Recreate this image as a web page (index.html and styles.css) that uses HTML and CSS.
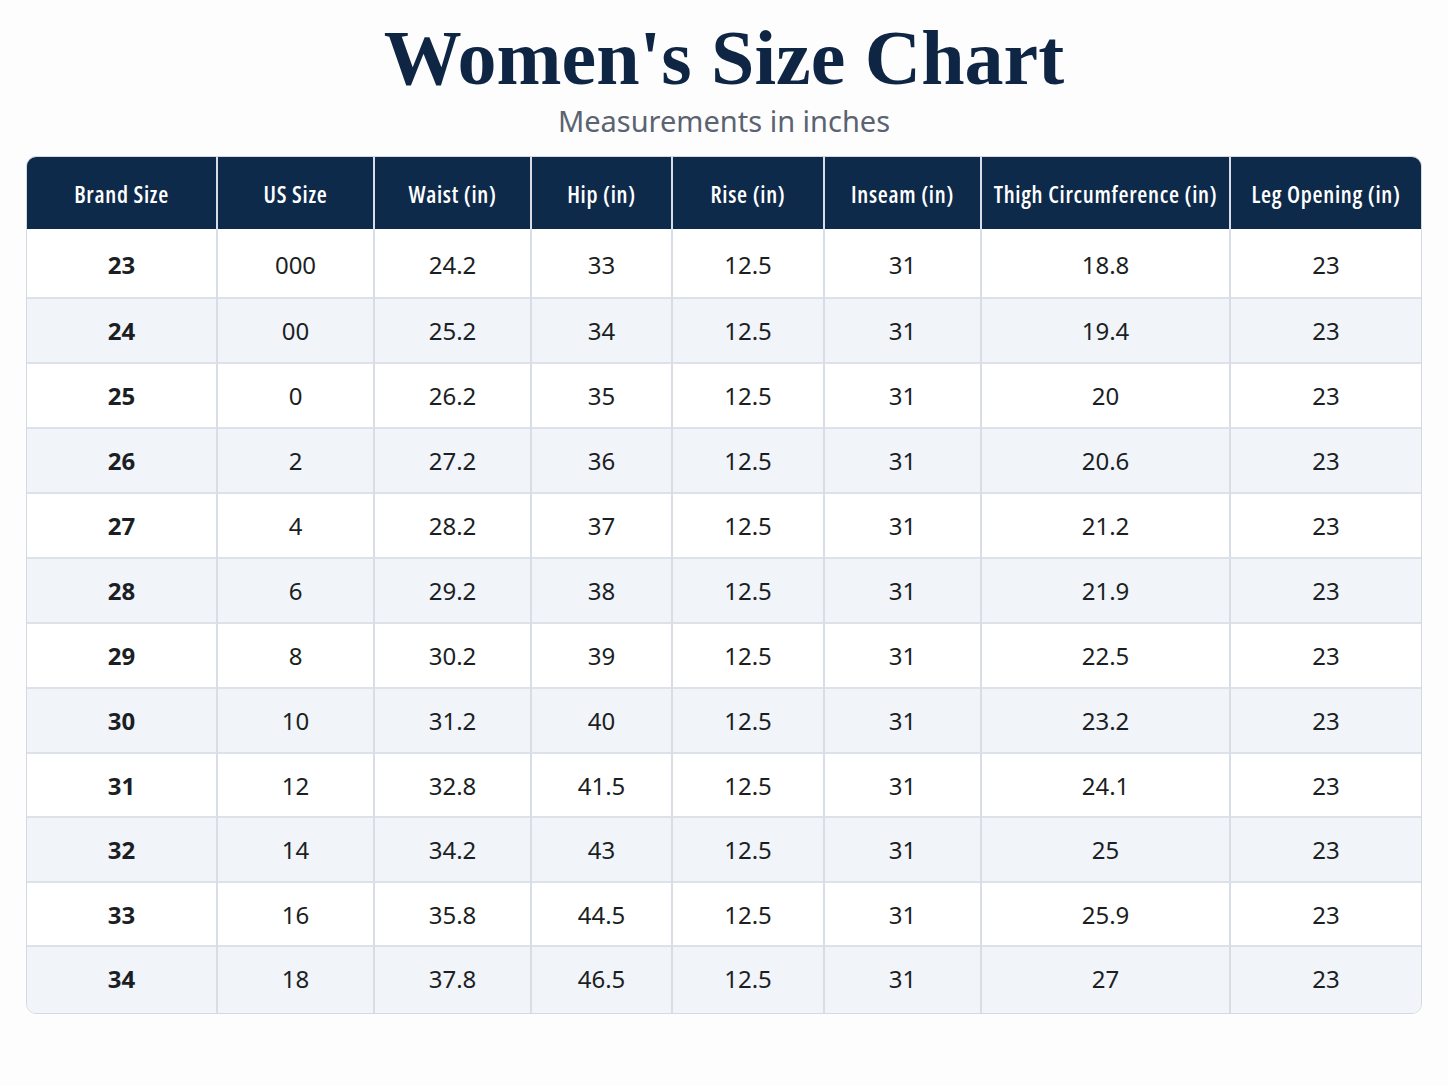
FILE: index.html
```html
<!DOCTYPE html>
<html lang="en">
<head>
<meta charset="utf-8">
<title>Women's Size Chart</title>
<link rel="stylesheet" href="styles.css">
</head>
<body>
<header class="page-head">
  <h1 class="title">Women's Size Chart</h1>
  <p class="subtitle">Measurements in inches</p>
</header>
<div class="chart">
<table class="size-table">
  <colgroup>
    <col class="c1"><col class="c2"><col class="c3"><col class="c4"><col class="c5"><col class="c6"><col class="c7"><col class="c8">
  </colgroup>
  <thead>
    <tr>
      <th>Brand Size</th><th>US Size</th><th>Waist (in)</th><th>Hip (in)</th><th>Rise (in)</th><th>Inseam (in)</th><th>Thigh Circumference (in)</th><th>Leg Opening (in)</th>
    </tr>
  </thead>
  <tbody>
    <tr class="first"><td>23</td><td>000</td><td>24.2</td><td>33</td><td>12.5</td><td>31</td><td>18.8</td><td>23</td></tr>
    <tr><td>24</td><td>00</td><td>25.2</td><td>34</td><td>12.5</td><td>31</td><td>19.4</td><td>23</td></tr>
    <tr><td>25</td><td>0</td><td>26.2</td><td>35</td><td>12.5</td><td>31</td><td>20</td><td>23</td></tr>
    <tr><td>26</td><td>2</td><td>27.2</td><td>36</td><td>12.5</td><td>31</td><td>20.6</td><td>23</td></tr>
    <tr><td>27</td><td>4</td><td>28.2</td><td>37</td><td>12.5</td><td>31</td><td>21.2</td><td>23</td></tr>
    <tr><td>28</td><td>6</td><td>29.2</td><td>38</td><td>12.5</td><td>31</td><td>21.9</td><td>23</td></tr>
    <tr><td>29</td><td>8</td><td>30.2</td><td>39</td><td>12.5</td><td>31</td><td>22.5</td><td>23</td></tr>
    <tr><td>30</td><td>10</td><td>31.2</td><td>40</td><td>12.5</td><td>31</td><td>23.2</td><td>23</td></tr>
    <tr class="tight"><td>31</td><td>12</td><td>32.8</td><td>41.5</td><td>12.5</td><td>31</td><td>24.1</td><td>23</td></tr>
    <tr><td>32</td><td>14</td><td>34.2</td><td>43</td><td>12.5</td><td>31</td><td>25</td><td>23</td></tr>
    <tr class="tight"><td>33</td><td>16</td><td>35.8</td><td>44.5</td><td>12.5</td><td>31</td><td>25.9</td><td>23</td></tr>
    <tr class="last"><td>34</td><td>18</td><td>37.8</td><td>46.5</td><td>12.5</td><td>31</td><td>27</td><td>23</td></tr>
  </tbody>
</table>
</div>
</body>
</html>
```
FILE: styles.css
```css
* { box-sizing: border-box; }
html, body {
  margin: 0;
  padding: 0;
  background: #fdfdfe;
}
body {
  font-family: "Noto Sans", "Open Sans", sans-serif;
  color: #1b1f24;
}
.page-head {
  text-align: center;
  padding-top: 18px;
}
.title {
  margin: 0;
  font-family: "Liberation Serif", "Times New Roman", serif;
  font-weight: 700;
  font-size: 78px;
  line-height: 80px;
  color: #0f2544;
}
.subtitle {
  margin: 3px 0 0;
  font-size: 29px;
  line-height: 40px;
  color: #5b6370;
}
.chart {
  margin: 15px 0 0 26px;
  width: 1396px;
  border: 1px solid #d3d9e2;
  border-radius: 10px;
  overflow: hidden;
  background: #fff;
}
.size-table {
  width: 100%;
  border-collapse: collapse;
  table-layout: fixed;
}
.c1 { width: 190px; }
.c2 { width: 157px; }
.c3 { width: 157px; }
.c4 { width: 141px; }
.c5 { width: 152px; }
.c6 { width: 157px; }
.c7 { width: 249px; }
.c8 { width: auto; }
.size-table th {
  background: #0e2a4b;
  color: #fff;
  height: 72px;
  font-family: "Open Sans", "Noto Sans", sans-serif;
  font-stretch: 75%;
  font-weight: 600;
  font-size: 23px;
  letter-spacing: 0.7px;
  text-align: center;
  white-space: nowrap;
  border-left: 2px solid #d9dee6;
  padding: 2px 0 0;
}
.size-table th:first-child { border-left: none; }
.size-table td {
  height: 65px;
  text-align: center;
  font-size: 24px;
  border-left: 2px solid #d9dee6;
  border-top: 2px solid #dde2ea;
  padding: 0;
}
.size-table td:first-child {
  border-left: none;
  font-weight: 700;
}
.size-table tr.first td { border-top: none; height: 69px; padding-top: 2px; }
.size-table tr.tight td { height: 64px; }
.size-table tr.last td { height: 67px; padding-bottom: 3px; }
.size-table tbody tr:nth-child(even) td { background: #f1f4f9; }
```
